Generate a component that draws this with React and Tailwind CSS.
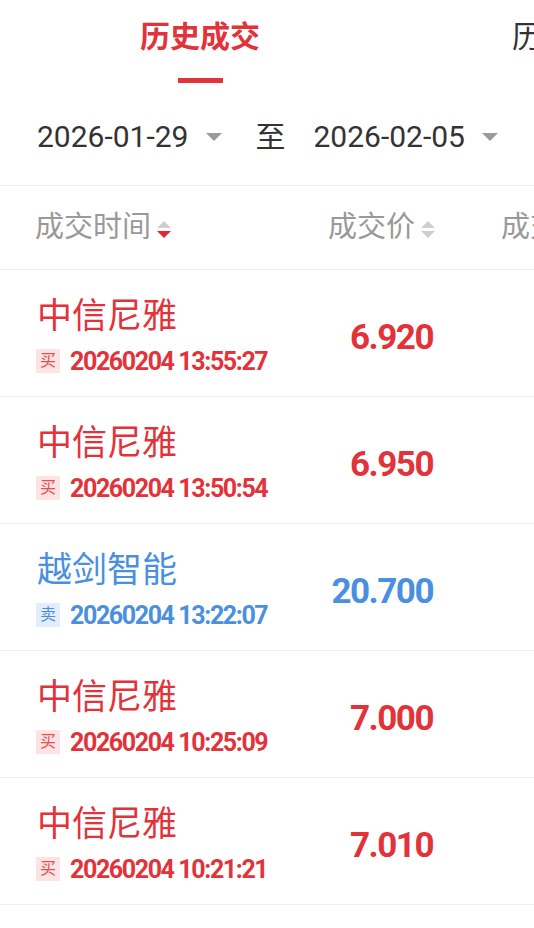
import React from "react";

const rows = [
  { name: "中信尼雅", side: "买", time: "20260204 13:55:27", price: "6.920", buy: true },
  { name: "中信尼雅", side: "买", time: "20260204 13:50:54", price: "6.950", buy: true },
  { name: "越剑智能", side: "卖", time: "20260204 13:22:07", price: "20.700", buy: false },
  { name: "中信尼雅", side: "买", time: "20260204 10:25:09", price: "7.000", buy: true },
  { name: "中信尼雅", side: "买", time: "20260204 10:21:21", price: "7.010", buy: true },
];

function Caret() {
  return (
    <svg width="16" height="8" viewBox="0 0 16 8" className="shrink-0">
      <polygon points="0,0 16,0 8,8" fill="#9a9a9a" />
    </svg>
  );
}

function Sort({ active }) {
  return (
    <svg width="16" height="20" viewBox="0 0 16 20" className="shrink-0 ml-[5px] mt-[4px]">
      <polygon points="1,8 15,8 8,1" fill="#cfcfcf" />
      <polygon points="1,11 15,11 8,18" fill={active ? "#e8262d" : "#cfcfcf"} />
    </svg>
  );
}

export default function App() {
  return (
    <div className="w-[534px] h-[928px] overflow-hidden bg-white font-[Roboto,'Noto_Sans_CJK_SC',sans-serif]">
      {/* tabs */}
      <div className="flex h-[88px] pl-[14px]">
        <div className="w-[372px] shrink-0 flex flex-col items-center">
          <div className="mt-[18px] h-[38px] leading-[38px] text-[30px] font-semibold text-[#e2333a] whitespace-nowrap">
            历史成交
          </div>
          <div className="mt-[22px] w-[45px] h-[5px] bg-[#e2333a]" />
        </div>
        <div className="w-[372px] shrink-0 flex flex-col items-center">
          <div className="mt-[18px] h-[38px] leading-[38px] text-[30px] text-[#333] whitespace-nowrap">
            历史委托
          </div>
        </div>
      </div>

      {/* date range */}
      <div className="h-[98px] flex items-center pl-[37px] border-b border-[#ececec] text-[#333] text-[30px] leading-none whitespace-nowrap">
        <span>2026-01-29</span>
        <span className="ml-[18px] flex"><Caret /></span>
        <span className="ml-[33px]">至</span>
        <span className="ml-[28px]">2026-02-05</span>
        <span className="ml-[17px] flex"><Caret /></span>
      </div>

      {/* header */}
      <div className="h-[84px] flex items-center pl-[35px] border-b border-[#ececec] text-[29px] text-[#999] leading-none whitespace-nowrap">
        <div className="w-[291px] shrink-0 flex items-center">
          <span>成交时间</span>
          <Sort active />
        </div>
        <div className="w-[110px] shrink-0 flex items-center justify-end">
          <span>成交价</span>
          <Sort />
        </div>
        <div className="pl-[65px] shrink-0 flex items-center">
          <span>成交量</span>
          <Sort />
        </div>
      </div>

      {/* rows */}
      {rows.map((r, i) => {
        const color = r.buy ? "text-[#e2333a]" : "text-[#4a8fe0]";
        const badge = r.buy ? "bg-[#fde3e3] text-[#e55050]" : "bg-[#e3edfb] text-[#4a8fe0]";
        return (
          <div
            key={i}
            className={`h-[127px] flex items-center pl-[36px] border-b border-[#efefef] whitespace-nowrap ${color}`}
          >
            <div className="w-[290px] shrink-0 flex flex-col mt-[5px]">
              <div className="text-[35px] leading-[40px] pl-[1px]">{r.name}</div>
              <div className="mt-[11px] flex items-center h-[26px]">
                <span className={`w-[24px] h-[24px] flex items-center justify-center text-[16px] leading-none ${badge}`}>
                  {r.side}
                </span>
                <span className="ml-[10px] text-[25px] font-bold tracking-[-1.4px] leading-none">
                  {r.time}
                </span>
              </div>
            </div>
            <div className="w-[110px] shrink-0 flex justify-end mt-[8px]">
              <span className="text-[35px] font-bold tracking-[-1.5px] leading-none mr-[3px]">
                {r.price}
              </span>
            </div>
          </div>
        );
      })}
    </div>
  );
}
